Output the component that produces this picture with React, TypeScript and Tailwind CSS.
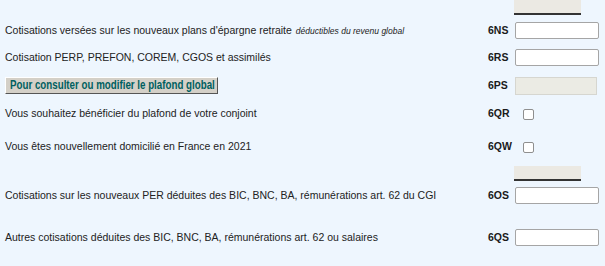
import React from 'react';

const font = { fontFamily: '"Liberation Sans", Arial, sans-serif' };

const Code: React.FC<{ code: string }> = ({ code }) => (
  <span className="w-[27px] text-left text-[10.5px] font-bold text-[#1a1a1a]">{code}</span>
);

const TextInput: React.FC = () => (
  <input
    type="text"
    className="w-[84px] h-[17px] bg-white border border-[#a5a5a5] rounded-[2px] outline-none"
  />
);

const Check: React.FC = () => (
  <span className="ml-[8px] w-[11px] h-[11px] bg-white border border-[#8f8f8f] rounded-[2px]" />
);

const Bar: React.FC<{ h: string }> = ({ h }) => (
  <div className={`${h} flex justify-end pr-[24px]`}>
    <div className="w-[67px] h-[15px] bg-[#ebe9e3] border-b-2 border-[#333]" />
  </div>
);

const App: React.FC = () => {
  return (
    <div className="w-[605px] h-[266px] bg-[#eef6fe] overflow-hidden text-[10.5px] text-[#222] whitespace-nowrap" style={font}>
      <Bar h="h-[17px]" />

      {/* 6NS */}
      <div className="h-[28px] flex items-center">
        <div className="flex-1 pl-[5px] flex items-baseline">
          <span>Cotisations versées sur les nouveaux plans d'épargne retraite</span>
          <span className="ml-[4px] italic text-[8.5px]">déductibles du revenu global</span>
        </div>
        <Code code="6NS" />
        <div className="w-[90px]"><TextInput /></div>
      </div>

      {/* 6RS */}
      <div className="h-[26px] flex items-center">
        <div className="flex-1 pl-[5px]">Cotisation PERP, PREFON, COREM, CGOS et assimilés</div>
        <Code code="6RS" />
        <div className="w-[90px]"><TextInput /></div>
      </div>

      {/* 6PS */}
      <div className="h-[29px] flex items-center">
        <div className="flex-1 pl-[5px]">
          <button className="w-[213px] h-[17px] pl-[4px] text-left overflow-hidden bg-[#d4d0c8] border border-t-white border-l-white border-b-[#555] border-r-[#555] text-[12.5px] font-bold text-[#005f5f] leading-none">
            <span className="inline-block origin-left scale-x-[0.78]">Pour consulter ou modifier le plafond global</span>
          </button>
        </div>
        <Code code="6PS" />
        <div className="w-[90px]">
          <div className="w-[82px] h-[18px] bg-[#ebebe4] border border-[#d6d6d0]" />
        </div>
      </div>

      {/* 6QR */}
      <div className="h-[28px] flex items-center">
        <div className="flex-1 pl-[5px]">Vous souhaitez bénéficier du plafond de votre conjoint</div>
        <Code code="6QR" />
        <div className="w-[90px] flex"><Check /></div>
      </div>

      {/* 6QW */}
      <div className="h-[38px] flex items-center">
        <div className="flex-1 pl-[5px]">Vous êtes nouvellement domicilié en France en 2021</div>
        <Code code="6QW" />
        <div className="w-[90px] flex"><Check /></div>
      </div>

      <Bar h="h-[16px]" />

      {/* 6OS */}
      <div className="h-[28px] flex items-center">
        <div className="flex-1 pl-[5px]">Cotisations sur les nouveaux PER déduites des BIC, BNC, BA, rémunérations art. 62 du CGI</div>
        <Code code="6OS" />
        <div className="w-[90px]"><TextInput /></div>
      </div>

      {/* 6QS */}
      <div className="h-[56px] flex items-center">
        <div className="flex-1 pl-[5px]">Autres cotisations déduites des BIC, BNC, BA, rémunérations art. 62 ou salaires</div>
        <Code code="6QS" />
        <div className="w-[90px]"><TextInput /></div>
      </div>
    </div>
  );
};

export default App;
